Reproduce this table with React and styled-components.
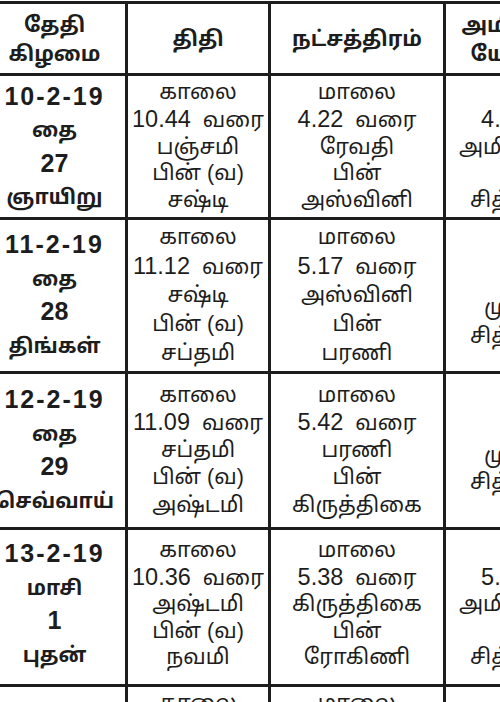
import React from "react";
import styled, { createGlobalStyle } from "styled-components";

const Global = createGlobalStyle`
  html, body { margin: 0; padding: 0; background: #ffffff; overflow: hidden; }
  body { font-family: "Liberation Sans", "Noto Sans Tamil", "Noto Sans", sans-serif; color: #1d1d1d; }
`;

const Page = styled.div`
  width: 500px;
  height: 702px;
  overflow: hidden;
`;

const Table = styled.table`
  border-collapse: collapse;
  table-layout: fixed;
  width: 654px;
  margin: 1px 0 0 -19px;
`;

const HeadRow = styled.tr`
  height: 72px;
`;

const Row = styled.tr`
  height: ${(p) => p.$h}px;
`;

const HeadCell = styled.th`
  border: 3px solid #1d1d1d;
  padding: 0;
  vertical-align: middle;
  text-align: center;
  font-weight: 700;
  font-size: 21px;
  line-height: 29px;
  white-space: pre;
`;

const DateCell = styled.td`
  border: 3px solid #1d1d1d;
  padding: 0 0 ${(p) => p.$pb || 0}px 0;
  vertical-align: middle;
  text-align: center;
  font-weight: 700;
  font-size: 20.5px;
  line-height: 32.5px;
  white-space: pre;
`;

const Cell = styled.td`
  border: 3px solid #1d1d1d;
  padding: ${(p) => p.$pt || 0}px 0 ${(p) => p.$pb || 0}px 0;
  vertical-align: middle;
  text-align: center;
  font-weight: 400;
  font-size: 21.5px;
  line-height: ${(p) => p.$lh}px;
  white-space: pre;
`;

const Line = styled.span`
  display: block;
`;

const Num = styled.span`
  font-size: ${(p) => (p.$bold ? 25 : 23.5)}px;
  letter-spacing: ${(p) => (p.$date ? 2 : 0)}px;
`;

const rows = [
  {
    h: 144, lh: 26.75,
    date: ["10-2-19", "தை", "27", "ஞாயிறு"],
    thithi: ["காலை", "10.44  வரை", "பஞ்சமி", "பின் (வ)", "சஷ்டி"],
    star: ["மாலை", "4.22  வரை", "ரேவதி", "பின்", "அஸ்வினி"],
    yogam: ["மாலை", "4.22  வரை", "அமிர்தயோகம்", "பின்", "சித்தயோகம்"],
  },
  {
    h: 153.5, lh: 28.75,
    date: ["11-2-19", "தை", "28", "திங்கள்"],
    thithi: ["காலை", "11.12  வரை", "சஷ்டி", "பின் (வ)", "சப்தமி"],
    star: ["மாலை", "5.17  வரை", "அஸ்வினி", "பின்", "பரணி"],
    yogam: ["நாள்", "முழுவதும்", "சித்தயோகம்"], shift: 24,
  },
  {
    h: 156.5, lh: 27.25,
    date: ["12-2-19", "தை", "29", "செவ்வாய்"],
    thithi: ["காலை", "11.09  வரை", "சப்தமி", "பின் (வ)", "அஷ்டமி"],
    star: ["மாலை", "5.42  வரை", "பரணி", "பின்", "கிருத்திகை"],
    yogam: ["நாள்", "முழுவதும்", "சித்தயோகம்"], shift: 10,
  },
  {
    h: 157, lh: 26.5, pb: 6, datePb: 6,
    date: ["13-2-19", "மாசி", "1", "புதன்"],
    thithi: ["காலை", "10.36  வரை", "அஷ்டமி", "பின் (வ)", "நவமி"],
    star: ["மாலை", "5.38  வரை", "கிருத்திகை", "பின்", "ரோகிணி"],
    yogam: ["மாலை", "5.38  வரை", "அமிர்தயோகம்", "பின்", "சித்தயோகம்"],
  },
  {
    h: 157, lh: 27, pb: 12, datePb: 0,
    date: ["14-2-19", "மாசி", "2", "வியாழன்"],
    thithi: ["காலை", "10.02  வரை", "நவமி", "பின் (வ)", "தசமி"],
    star: ["மாலை", "5.22  வரை", "ரோகிணி", "பின்", "மிருகசீரிடம்"],
    yogam: ["நாள்", "முழுவதும்", "சித்தயோகம்"],
  },
];

function renderLine(text, key, bold) {
  const m = text.match(/^([\d.\-]+)(.*)$/);
  return (
    <Line key={key}>
      {m ? (
        <>
          <Num $bold={bold} $date={m[1].includes("-")}>{m[1]}</Num>
          {m[2]}
        </>
      ) : (
        text
      )}
    </Line>
  );
}

const lines = (arr, bold) => arr.map((t, i) => renderLine(t, i, bold));

export default function App() {
  return (
    <Page>
      <Global />
      <Table>
        <colgroup>
          <col style={{ width: 144 }} />
          <col style={{ width: 143 }} />
          <col style={{ width: 175 }} />
          <col style={{ width: 192 }} />
        </colgroup>
        <thead>
          <HeadRow>
            <HeadCell>{lines(["தேதி", "கிழமை"])}</HeadCell>
            <HeadCell>{lines(["திதி"])}</HeadCell>
            <HeadCell>{lines(["நட்சத்திரம்"])}</HeadCell>
            <HeadCell>{lines(["அமிர்த, சித்த", "யோகங்கள்"])}</HeadCell>
          </HeadRow>
        </thead>
        <tbody>
          {rows.map((r, i) => (
            <Row key={i} $h={r.h}>
              <DateCell $pb={r.datePb}>{lines(r.date, true)}</DateCell>
              <Cell $lh={r.lh} $pb={r.pb}>{lines(r.thithi)}</Cell>
              <Cell $lh={r.lh} $pb={r.pb}>{lines(r.star)}</Cell>
              <Cell $lh={r.lh} $pb={r.pb} $pt={r.shift}>{lines(r.yogam)}</Cell>
            </Row>
          ))}
        </tbody>
      </Table>
    </Page>
  );
}
